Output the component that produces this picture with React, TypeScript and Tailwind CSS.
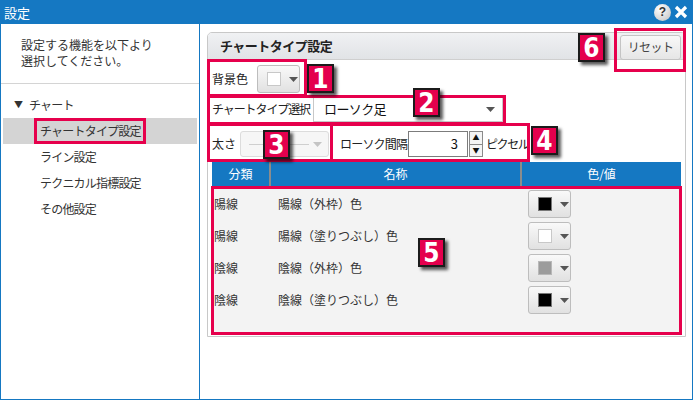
import React from 'react';

const RED = 'border-[#e6004c]';

function Arrow({ light }: { light?: boolean }) {
  return (
    <svg width="9" height="5" viewBox="0 0 9 5" className="shrink-0">
      <polygon points="0,0 9,0 4.5,5" fill={light ? '#c4c4c4' : '#555555'} />
    </svg>
  );
}

function ColorBtn({ swatch }: { swatch: string }) {
  return (
    <div className="w-[43px] h-[28px] rounded-[3px] border border-[#bdbdbd] bg-gradient-to-b from-[#f9f9f9] to-[#e1e1e1] flex items-center pl-[9px] gap-[8px] shrink-0">
      <div className={`w-[14px] h-[14px] border ${swatch}`} />
      <Arrow />
    </div>
  );
}

function Badge({ n, pos }: { n: string; pos: string }) {
  return (
    <div
      className={`absolute ${pos} w-[27px] h-[29px] bg-[#e4004d] border-2 border-[#1b1b1b] shadow-[3px_3px_3px_rgba(0,0,0,0.65)] flex items-center justify-center text-white text-[26px] font-bold leading-none font-['Liberation_Sans_Narrow','DejaVu_Sans_Condensed',sans-serif]`}
    >
      <span className="scale-y-[1.05]">{n}</span>
    </div>
  );
}

function RedBox({ pos }: { pos: string }) {
  return <div className={`absolute ${pos} border-[3px] ${RED} pointer-events-none`} />;
}

const rows = [
  { kind: '陽線', name: '陽線（外枠）色', swatch: 'bg-black border-[#777]' },
  { kind: '陽線', name: '陽線（塗りつぶし）色', swatch: 'bg-white border-[#c8c8c8]' },
  { kind: '陰線', name: '陰線（外枠）色', swatch: 'bg-[#9c9c9c] border-[#b8b8b8]' },
  { kind: '陰線', name: '陰線（塗りつぶし）色', swatch: 'bg-black border-[#777]' },
];

const menu = ['チャートタイプ設定', 'ライン設定', 'テクニカル指標設定', 'その他設定'];

export default function App() {
  return (
    <div className="relative w-[693px] h-[400px] overflow-hidden bg-white flex flex-col text-[12px] text-[#222] font-['Noto_Sans_CJK_JP','Noto_Sans',sans-serif]">
      {/* title bar */}
      <div className="h-[24px] shrink-0 bg-[#1578c2] flex items-center pl-[4px] pr-[5px]">
        <span className="text-white text-[13px] leading-none">設定</span>
        <div className="ml-auto flex items-center gap-[3px]">
          <div className="w-[17px] h-[17px] rounded-full bg-[radial-gradient(circle_at_35%_30%,#ffffff,#bfbfbf)] flex items-center justify-center text-[#333] text-[12px] font-bold leading-none font-['Liberation_Sans',sans-serif]">
            ?
          </div>
          <svg width="14" height="14" viewBox="0 0 14 14">
            <path d="M2 2 L12 12 M12 2 L2 12" stroke="#ffffff" strokeWidth="3.2" />
          </svg>
        </div>
      </div>

      <div className="flex-1 flex border-l border-r border-b border-[#1578c2]">
        {/* left panel */}
        <div className="w-[199px] shrink-0 border-r border-[#1578c2] flex flex-col">
          <div className="pl-[20px] pt-[13px] pb-[14px] leading-[16px] border-b border-[#d4d4d4] text-[#333]">
            <div>設定する機能を以下より</div>
            <div>選択してください。</div>
          </div>
          <div className="mt-[11px] h-[20px] flex items-center pl-[13px] text-[#333]">
            <span className="text-[9px] mr-[6px]">▼</span>
            <span className="tracking-[-0.8px]">チャート</span>
          </div>
          <div className="mt-[3px] flex flex-col">
            {menu.map((m, i) => (
              <div
                key={m}
                className={`h-[26px] mx-[2px] pl-[37px] flex items-center text-[#333] tracking-[-0.8px] ${i === 0 ? 'bg-[#d4d4d4]' : ''}`}
              >
                {m}
              </div>
            ))}
          </div>
        </div>

        {/* right panel */}
        <div className="flex-1 pt-[8px] pl-[7px] pr-[6px]">
          <div className="h-[305px] border border-[#c8c8c8] rounded-t-[5px] flex flex-col">
            <div className="h-[27px] shrink-0 border-b border-[#cfcfcf] rounded-t-[4px] bg-gradient-to-b from-[#f0f1f3] to-[#e1e3e6] flex items-center pl-[12px] pr-[4px]">
              <span className="font-bold text-[13px] tracking-[-0.5px] text-[#222]">チャートタイプ設定</span>
              <div className="ml-auto mt-[2px] w-[61px] h-[25px] rounded-[3px] border border-[#c4c4c4] bg-gradient-to-b from-[#f8f8f8] to-[#e6e6e6] flex items-center justify-center text-[#444] tracking-[-0.6px]">
                リセット
              </div>
            </div>

            <div className="flex-1 px-[4px] flex flex-col">
              {/* row 1 */}
              <div className="mt-[5px] mb-[2px] h-[28px] flex items-center">
                <span className="w-[45px]">背景色</span>
                <ColorBtn swatch="bg-white border-[#c8c8c8]" />
              </div>
              {/* row 2 */}
              <div className="h-[28px] flex items-center">
                <span className="w-[101px] whitespace-nowrap tracking-[-1.1px]">チャートタイプ選択</span>
                <div className="w-[190px] h-[25px] border border-[#c8c8c8] bg-white flex items-center pl-[10px] pr-[7px]">
                  <span className="text-[13px] tracking-[-0.6px] text-[#111]">ローソク足</span>
                  <div className="ml-auto">
                    <Arrow />
                  </div>
                </div>
              </div>
              {/* row 3 */}
              <div className="pt-[8px] pb-[5px] flex items-center">
                <div className="h-[26px] flex items-center">
                  <span className="w-[28px]">太さ</span>
                  <div className="w-[89px] h-[26px] rounded-[3px] border border-[#dcdcdc] bg-[#f6f6f6] flex items-center pl-[8px] pr-[6px]">
                    <div className="w-[60px] h-[1px] bg-[#cfcfcf]" />
                    <div className="ml-auto">
                      <Arrow light />
                    </div>
                  </div>
                </div>
                <span className="ml-[11px] w-[68px] tracking-[-0.8px]">ローソク間隔</span>
                <div className="w-[60px] h-[26px] border border-[#7c7c7c] bg-white flex items-center justify-end pr-[9px] text-[13px] text-[#111]">
                  3
                </div>
                <div className="ml-[1px] w-[14px] h-[26px] flex flex-col">
                  <div className="flex-1 border border-[#8a8a8a] bg-[#f4f4f4] flex items-center justify-center text-[7px] leading-none text-[#111]">▲</div>
                  <div className="flex-1 border border-t-0 border-[#8a8a8a] bg-[#f4f4f4] flex items-center justify-center text-[7px] leading-none text-[#111]">▼</div>
                </div>
                <span className="ml-[3px] tracking-[-1.4px]">ピクセル</span>
              </div>

              {/* table header */}
              <div className="h-[24px] shrink-0 bg-[#1578c2] flex text-white">
                <div className="w-[59px] border-r-2 border-[#8c8c8c] flex items-center justify-center">分類</div>
                <div className="w-[251px] border-r-2 border-[#8c8c8c] flex items-center justify-center">名称</div>
                <div className="flex-1 flex items-center justify-center">色/値</div>
              </div>
              {/* table body */}
              <div className="h-[148px] shrink-0 bg-[#f3f3f3] pt-[2px] flex flex-col">
                {rows.map((r, i) => (
                  <div key={i} className="h-[32px] flex items-center">
                    <div className="w-[59px] pl-[2px] text-[#333]">{r.kind}</div>
                    <div className="w-[251px] pl-[7px] text-[#333]">{r.name}</div>
                    <div className="pl-[6px]">
                      <ColorBtn swatch={r.swatch} />
                    </div>
                  </div>
                ))}
              </div>
            </div>
          </div>
        </div>
      </div>

      {/* annotations */}
      <RedBox pos="left-[34px] top-[118px] w-[112px] h-[26px]" />
      <RedBox pos="left-[207px] top-[59px] w-[100px] h-[38px]" />
      <RedBox pos="left-[207px] top-[95px] w-[299px] h-[30px]" />
      <RedBox pos="left-[207px] top-[123px] w-[126px] h-[39px]" />
      <RedBox pos="left-[330px] top-[123px] w-[200px] h-[39px]" />
      <RedBox pos="left-[211px] top-[186px] w-[471px] h-[149px]" />
      <RedBox pos="left-[614px] top-[28px] w-[72px] h-[44px]" />

      <Badge n="1" pos="left-[307px] top-[64px]" />
      <Badge n="2" pos="left-[413px] top-[88px]" />
      <Badge n="3" pos="left-[263px] top-[130px]" />
      <Badge n="4" pos="left-[531px] top-[126px]" />
      <Badge n="5" pos="left-[418px] top-[238px]" />
      <Badge n="6" pos="left-[578px] top-[33px]" />
    </div>
  );
}
